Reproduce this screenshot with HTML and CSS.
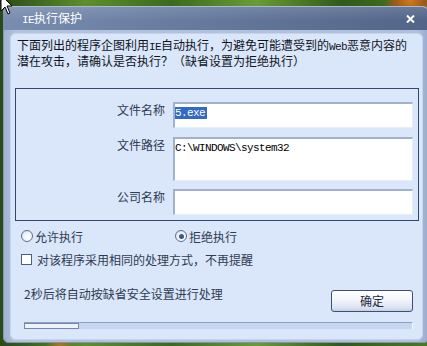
FILE: index.html
```html
<!DOCTYPE html>
<html>
<head>
<meta charset="utf-8">
<title>IE执行保护</title>
<link rel="stylesheet" href="styles.css">
</head>
<body>
<div class="window">
  <div class="titlebar">
    <span class="title"><span class="lat">IE</span>执行保护</span>
    <svg class="close" width="9" height="8" viewBox="0 0 9 8"><path d="M1 0.5 L8 7.5 M8 0.5 L1 7.5" stroke="#fff" stroke-width="2"/></svg>
  </div>
  <div class="panel">
    <p class="intro">下面列出的程序企图利用<span class="lat">IE</span>自动执行，为避免可能遭受到的<span class="lat">Web</span>恶意内容的<br>潜在攻击，请确认是否执行？（缺省设置为拒绝执行）</p>
    <div class="group">
      <div class="row">
        <span class="lbl">文件名称</span>
        <div class="field short"><span class="mono sel">5.exe</span></div>
      </div>
      <div class="row gap9">
        <span class="lbl">文件路径</span>
        <div class="field tall"><span class="mono">C:\WINDOWS\system32</span></div>
      </div>
      <div class="row gap8">
        <span class="lbl">公司名称</span>
        <div class="field short"></div>
      </div>
    </div>
    <div class="radios">
      <span class="opt"><span class="radio"></span>允许执行</span>
      <span class="opt second"><span class="radio on"></span>拒绝执行</span>
    </div>
    <div class="check"><span class="box"></span>对该程序采用相同的处理方式，不再提醒</div>
    <div class="bottom">
      <span class="note">2秒后将自动按缺省安全设置进行处理</span>
      <button class="btn">确定</button>
    </div>
    <div class="progress"><div class="fill" style="width:55px"></div></div>
  </div>
</div>
<svg class="cursor" width="14" height="16" viewBox="0 0 14 16"><path d="M1 -5 L1 11 L5 7 L8 14 L10 13 L7 6 L12 6 Z" fill="#fff" stroke="#000" stroke-width="1"/></svg>
</body>
</html>
```
FILE: styles.css
```css
html, body {
  margin: 0;
  padding: 0;
}
body {
  width: 427px;
  height: 346px;
  overflow: hidden;
  position: relative;
  font-family: "Noto Sans CJK SC", "Noto Sans", sans-serif;
  font-size: 12px;
  background:
    radial-gradient(circle at 410px 0px, #d07a20 0, #a05a18 14px, transparent 26px),
    radial-gradient(circle at 60px 346px, #b8701c 0, transparent 14px),
    linear-gradient(to right, #2a4a16, #5d8f2c 20%, #3a6a1e 40%, #6a9c34 60%, #2f5a18 80%, #4a7a22);
}
.window {
  margin: 6px 0 0 3px;
  width: 426px;
  height: 337px;
  background: linear-gradient(to right, #9eb0cf, #b3c3de 3%, #b0c0dc 97%, #98aacb);
  border-radius: 7px 7px 6px 6px;
  box-shadow: inset 0 -1px 0 #7f92b4, inset 1px 0 0 #8598ba;
  display: flex;
  flex-direction: column;
  box-sizing: border-box;
}
.titlebar {
  height: 24px;
  display: flex;
  align-items: center;
  justify-content: space-between;
  padding: 0 14px 0 19px;
  background: linear-gradient(to bottom, rgba(255,255,255,0.12), rgba(255,255,255,0) 60%),
              linear-gradient(to right, #798db0, #687ca0 40%, #5b6f93 75%, #526589);
  border-radius: 7px 7px 0 0;
  border-top: 1px solid #a9b8d2;
  box-sizing: border-box;
}
.title {
  color: #fff;
  font-size: 12px;
  line-height: 13px;
}
.lat {
  font-family: "Liberation Mono", monospace;
  font-size: 11px;
  letter-spacing: -0.6px;
}
.close {
  display: block;
  margin-top: 1px;
}
.panel {
  margin: 3px 6px 3px 7px;
  flex: 1;
  background: #dae6fa;
  border-radius: 6px;
  padding-top: 5px;
  box-shadow: inset 0 0 0 1px #c6d5ee;
}
.intro {
  margin: 0 0 0 7px;
  font-size: 12px;
  line-height: 13px;
  color: #10141c;
  height: 26px;
  white-space: nowrap;
}
.group {
  margin: 24px 0 0 5px;
  width: 404px;
  box-sizing: border-box;
  border: 1px solid #34466a;
  padding: 13px 5px 5px 0;
}
.row {
  display: flex;
  gap: 8px;
}
.gap9 { margin-top: 9px; }
.gap8 { margin-top: 8px; }
.lbl {
  width: 149px;
  text-align: right;
  color: #2f3b52;
  line-height: 13px;
  padding-top: 1px;
}
.field {
  width: 240px;
  background: #fff;
  box-sizing: border-box;
  border-top: 2px solid #a2b1cb;
  border-left: 2px solid #a2b1cb;
  border-right: 1px solid #e6edf8;
  border-bottom: 1px solid #e6edf8;
  line-height: 13px;
}
.short { height: 26px; }
.tall { height: 44px; }
.mono {
  font-family: "Liberation Mono", monospace;
  font-size: 11px;
  letter-spacing: -0.6px;
  color: #000;
  display: inline-block;
  line-height: 12px;
}
.field.tall .mono { padding-top: 2px; }
.sel {
  background: #316ac5;
  color: #fff;
  padding-right: 2px;
}
.radios {
  margin: 9px 0 0 11px;
  display: flex;
  height: 12px;
  line-height: 13px;
  color: #2f3b52;
}
.opt {
  display: flex;
  align-items: center;
  gap: 2px;
}
.opt.second {
  margin-left: 92px;
}
.radio {
  width: 12px;
  height: 12px;
  box-sizing: border-box;
  border-radius: 50%;
  border: 1px solid #5d6f92;
  background: radial-gradient(circle at 60% 65%, #fff 0, #eef2f9 50%, #c9d3e4 100%);
  display: flex;
  align-items: center;
  justify-content: center;
}
.radio.on::after {
  content: "";
  width: 5px;
  height: 5px;
  border-radius: 50%;
  background: #3f5683;
}
.check {
  margin: 11px 0 0 11px;
  display: flex;
  align-items: center;
  gap: 5px;
  height: 12px;
  line-height: 13px;
  color: #2f3b52;
}
.box {
  width: 11px;
  height: 11px;
  box-sizing: border-box;
  border: 1px solid #4d5d7c;
  background: #fff;
}
.bottom {
  margin: 23px 10px 0 14px;
  display: flex;
  justify-content: space-between;
  align-items: flex-start;
}
.note {
  color: #2f3b52;
  line-height: 12px;
}
.btn {
  margin-top: 2px;
  width: 82px;
  height: 22px;
  border: 1px solid #3d4f72;
  border-radius: 3px;
  background: linear-gradient(to bottom, #ffffff, #f2f5fb 45%, #dae2f0 85%, #c3cfe4);
  font-family: "Noto Sans CJK SC", sans-serif;
  font-size: 12px;
  color: #1e2a40;
  padding: 0;
  line-height: 18px;
}
.progress {
  margin: 10px 0 0 14px;
  width: 389px;
  height: 7px;
  box-sizing: border-box;
  background: #c6d6f1;
  border-top: 1px solid #8fa1c3;
  border-right: 1px solid #f4f8ff;
  display: flex;
}
.fill {
  height: 6px;
  box-sizing: border-box;
  border: 1px solid #7288b2;
  background: #edf2fb;
}
.cursor {
  position: absolute;
  left: 0;
  top: 0;
}
```
